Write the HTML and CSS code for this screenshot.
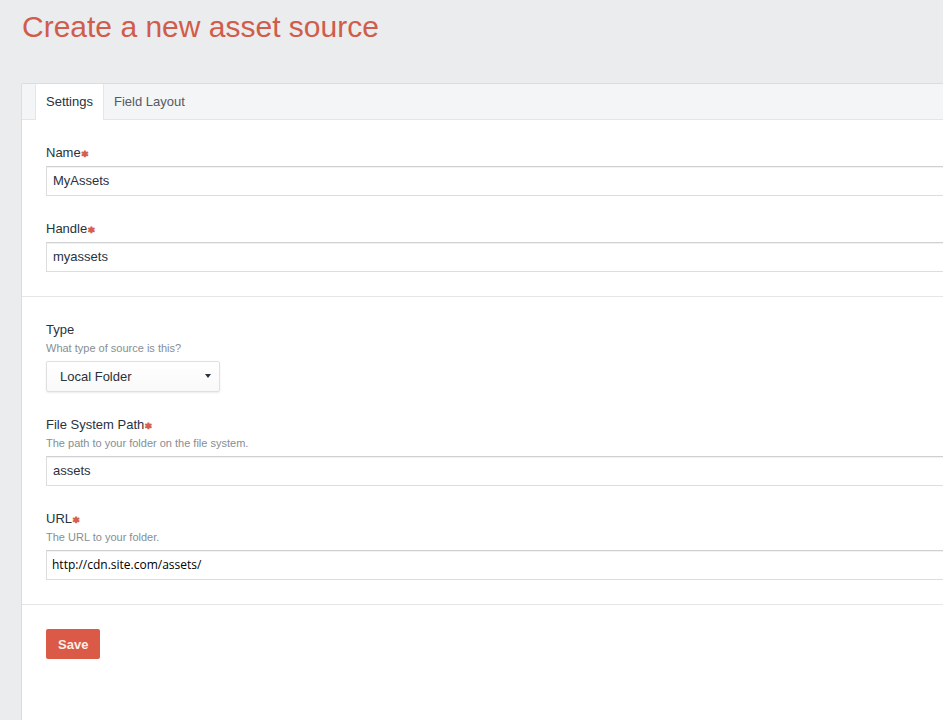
FILE: index.html
```html
<!DOCTYPE html>
<html lang="en">
<head>
    <meta charset="UTF-8">
    <meta name="viewport" content="width=device-width, initial-scale=1.0">
    <title>Create a new asset source</title>
    <link rel="stylesheet" href="styles.css">
</head>
<body>
    <header class="page-header">
        <h1>Create a new asset source</h1>
    </header>
    <main class="pane">
        <nav class="tabs">
            <a class="tab sel" href="#settings">Settings</a>
            <a class="tab" href="#field-layout">Field Layout</a>
        </nav>
        <form id="settings">
            <div class="group">
                <div class="field">
                    <label class="required" for="name">Name</label>
                    <input class="text" type="text" id="name" value="MyAssets" required>
                </div>
                <div class="field">
                    <label class="required" for="handle">Handle</label>
                    <input class="text" type="text" id="handle" value="myassets" required>
                </div>
            </div>
            <div class="group">
                <div class="field">
                    <label for="type">Type</label>
                    <p class="instructions">What type of source is this?</p>
                    <div class="select">
                        <select id="type">
                            <option>Local Folder</option>
                        </select>
                    </div>
                </div>
                <div class="field">
                    <label class="required" for="path">File System Path</label>
                    <p class="instructions">The path to your folder on the file system.</p>
                    <input class="text" type="text" id="path" value="assets" required>
                </div>
                <div class="field">
                    <label class="required" for="url">URL</label>
                    <p class="instructions">The URL to your folder.</p>
                    <input class="text url" type="text" id="url" value="http://cdn.site.com/assets/" required>
                </div>
            </div>
            <div class="group">
                <button class="btn" type="submit">Save</button>
            </div>
        </form>
    </main>
</body>
</html>
```

FILE: styles.css
```css
* { box-sizing: border-box; }
body { display: flex; flex-direction: column; min-height: 100vh; margin: 0; background-color: #ebeced; color: #29323d; font: 13px/16px "Liberation Sans", Arial, sans-serif; }
h1, p { margin: 0; }

.page-header { padding: 9px 22px 38px; }
.page-header h1 { color: #d05c4b; font-size: 30px; font-weight: normal; line-height: 36px; }

/* the pane runs out to the right edge of the window */
.pane { flex: 1; margin-left: 21px; background-color: #fff; border: 1px solid #dcdddf; border-width: 1px 0 0 1px; border-top-left-radius: 3px; }

.tabs { display: flex; height: 36px; padding-left: 13px; background-color: #f4f5f7; box-shadow: inset 0 -1px 0 #e3e5e8; border-top-left-radius: 2px; }
.tab { padding: 9px 10px; color: #555a60; line-height: 18px; text-decoration: none; }
.tab.sel { background-color: #fff; border: 1px solid #e3e5e8; border-width: 0 1px; border-radius: 2px 2px 0 0; color: #29323d; }

.group { display: flex; flex-direction: column; gap: 24px; padding: 24px 0 24px 24px; }
.group + .group { border-top: 1px solid #e5e6e8; }
.field { display: flex; flex-direction: column; align-items: flex-start; gap: 6px; }
.field label { height: 16px; line-height: 18px; }
.required::after { content: "*"; margin-left: 1px; color: #d4604f; font: bold 12px/1px "DejaVu Sans", sans-serif; vertical-align: -3px; -webkit-text-stroke: 1px #d4604f; }
.instructions { margin-top: -2px; color: #868e93; font-size: 11px; line-height: 14px; }

.text { width: 100%; height: 30px; padding: 0 6px 2px; background-color: #fff; border: 1px solid #dcdddf; border-top-color: #cfd0d2; border-right: 0; box-shadow: inset 0 2px 1px -1px rgba(0, 0, 0, 0.06); color: #29323d; font: inherit; outline: none; }
.text.url { padding: 0 5px 1px; color: #000; font-family: "Open Sans", sans-serif; font-size: 12px; }

.select { position: relative; }
.select select { display: block; width: 174px; height: 31px; padding: 0 13px; appearance: none; background: linear-gradient(#fff, #f9f9fa); border: 1px solid #dfe0e2; border-radius: 2px; box-shadow: 0 1px 2px rgba(0, 0, 0, 0.08); color: #29323d; font: inherit; }
.select::after { content: ""; position: absolute; top: 13px; right: 9px; border: 3px solid transparent; border-top: 4px solid #29323d; border-bottom: 0; pointer-events: none; }

.btn { align-self: flex-start; height: 30px; padding: 1px 12px 0; background-color: #da5a47; border: 0; border-radius: 2px; color: #fbeeea; font: bold 13px/29px "Liberation Sans", Arial, sans-serif; cursor: pointer; }
```
